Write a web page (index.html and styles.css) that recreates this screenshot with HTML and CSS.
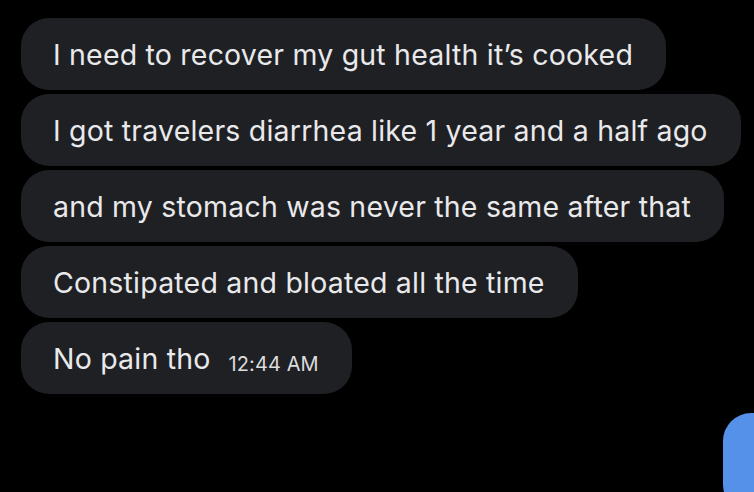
FILE: index.html
```html
<!DOCTYPE html>
<html lang="en">
<head>
    <meta charset="UTF-8">
    <meta name="viewport" content="width=device-width, initial-scale=1.0">
    <title>Messages</title>
    <link rel="stylesheet" href="styles.css">
</head>
<body>
    <div class="thread">
        <div class="bubble">I need to recover my gut health it’s cooked</div>
        <div class="bubble">I got travelers diarrhea like 1 year and a half ago</div>
        <div class="bubble">and my stomach was never the same after that</div>
        <div class="bubble">Constipated and bloated all the time</div>
        <div class="bubble">No pain tho <span class="time">12:44 AM</span></div>

        <!-- next message (sent), cut off by the window -->
        <div class="sent-row">
            <div class="bubble sent"></div>
        </div>
    </div>
</body>
</html>
```

FILE: styles.css
```css
body {
    margin: 0;
    background-color: #000;
    color: #e9e9eb;
    font-family: Inter, "Noto Sans", sans-serif;
    overflow: hidden;
}

.thread {
    display: flex;
    flex-direction: column;
    align-items: flex-start;
    gap: 4px;
    padding: 18px 0 0 21px;
}

.bubble {
    display: flex;
    align-items: center;
    height: 72px;
    box-sizing: border-box;
    padding: 0 33px 0 32px;
    background-color: #1f2023;
    border-radius: 28px;
    font-size: 28.5px;
    letter-spacing: 0.2px;
    white-space: nowrap;
}

.time {
    margin-left: 18px;
    margin-top: 12px;
    font-size: 20px;
    letter-spacing: 0.1px;
    color: #dcdcde;
}

.sent-row {
    align-self: stretch;
    display: flex;
    justify-content: flex-end;
    margin-top: 15px;
}

.bubble.sent {
    width: 80px;
    height: 100px;
    margin-right: -49px;
    background-color: #5591e8;
    padding: 0;
}
```
